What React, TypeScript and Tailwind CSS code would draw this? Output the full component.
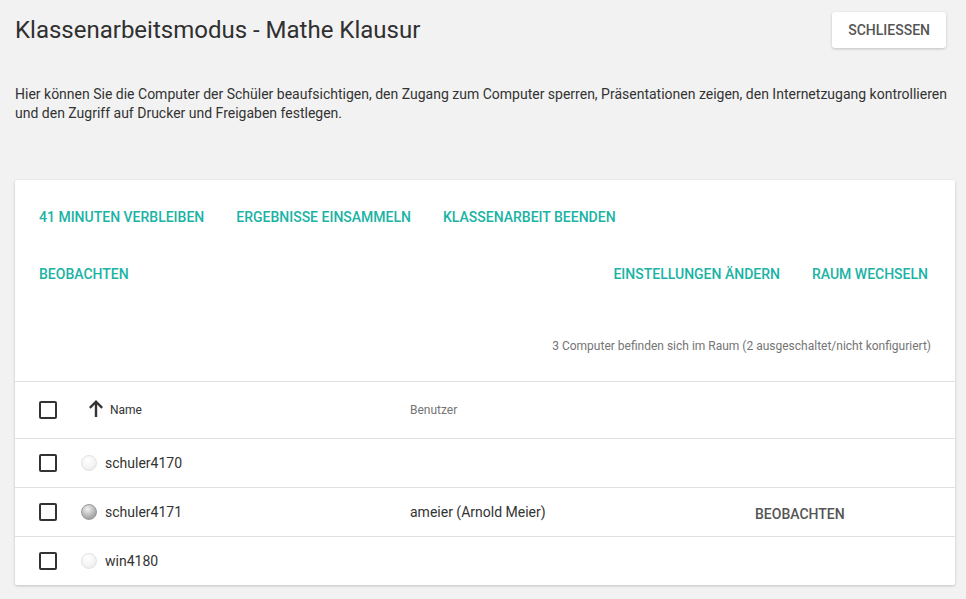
const teal = 'text-[#1ab3a4]';

const computers = [
  { name: 'schuler4170', user: '', online: false },
  { name: 'schuler4171', user: 'ameier (Arnold Meier)', online: true },
  { name: 'win4180', user: '', online: false },
];

function Checkbox() {
  return <div className="w-[18px] h-[18px] border-2 border-[#333] rounded-[2px] bg-white" />;
}

function StatusDot({ online }: { online: boolean }) {
  return online ? (
    <div className="w-4 h-4 rounded-full border border-[#9a9a9a] bg-[radial-gradient(circle_at_40%_30%,#f2f2f2_0%,#b5b5b5_55%,#8a8a8a_100%)]" />
  ) : (
    <div className="w-4 h-4 rounded-full border border-[#e2e2e2] bg-[radial-gradient(circle_at_40%_30%,#ffffff_0%,#f4f4f4_55%,#e6e6e6_100%)]" />
  );
}

function TextButton({ label }: { label: string }) {
  return (
    <button className={`h-9 px-4 text-sm font-medium uppercase ${teal} rounded`}>{label}</button>
  );
}

export default function App() {
  return (
    <div className="min-h-screen bg-[#f2f2f2] px-[15px] pb-4 text-[#333]" style={{ fontFamily: 'Roboto, "Liberation Sans", sans-serif' }}>
      {/* Header */}
      <div className="flex items-center justify-between pt-3 pr-[5px]">
        <h1 className="text-2xl font-normal text-[#303030]">Klassenarbeitsmodus - Mathe Klausur</h1>
        <button className="h-9 px-4 bg-white text-sm font-medium text-[#555] rounded-[3px] shadow-[0_1px_3px_rgba(0,0,0,0.2)]">
          SCHLIESSEN
        </button>
      </div>

      <p className="mt-[37px] text-sm leading-[19px] text-[#333]">
        Hier können Sie die Computer der Schüler beaufsichtigen, den Zugang zum Computer sperren, Präsentationen zeigen, den Internetzugang kontrollieren
        und den Zugriff auf Drucker und Freigaben festlegen.
      </p>

      {/* Card */}
      <div className="mt-[57px] mr-[-4px] bg-white rounded-[2px] shadow-[0_1px_3px_rgba(0,0,0,0.2)]">
        <div className="pt-[19px] px-2 pr-[11px]">
          <div className="flex">
            <TextButton label="41 Minuten verbleiben" />
            <TextButton label="Ergebnisse einsammeln" />
            <TextButton label="Klassenarbeit beenden" />
          </div>
          <div className="flex mt-[21px]">
            <TextButton label="Beobachten" />
            <div className="flex-1" />
            <TextButton label="Einstellungen ändern" />
            <TextButton label="Raum wechseln" />
          </div>
          <div className="mt-[46px] text-right text-xs leading-4 text-[#757575] pr-[13px]">
            3 Computer befinden sich im Raum (2 ausgeschaltet/nicht konfiguriert)
          </div>
        </div>

        <div className="mt-[27px] border-t border-[#e0e0e0]">
          {/* Table header */}
          <div className="grid grid-cols-[42px_329px_345px_1fr] items-center h-[56px] px-6">
            <Checkbox />
            <div className="flex items-center">
              <svg width="14" height="17" viewBox="0 0 14 17" className="ml-[8px] mb-[3px] fill-[#333]">
                <path d="M7 0 L14 7 L12.3 8.7 L8.2 4.6 V17 H5.8 V4.6 L1.7 8.7 L0 7 Z" />
              </svg>
              <span className="ml-[7px] text-xs text-[#333]">Name</span>
            </div>
            <span className="text-xs text-[#757575]">Benutzer</span>
            <span />
          </div>
          {computers.map((c) => (
            <div key={c.name} className="grid grid-cols-[42px_329px_345px_1fr] items-center h-[49px] px-6 border-t border-[#e0e0e0]">
              <Checkbox />
              <div className="flex items-center gap-2">
                <StatusDot online={c.online} />
                <span className="text-sm text-[#333]">{c.name}</span>
              </div>
              <span className="text-sm text-[#333]">{c.user}</span>
              <div>
                {c.online && <span className="text-sm font-medium text-[#555] relative top-[2px]">BEOBACHTEN</span>}
              </div>
            </div>
          ))}
        </div>
      </div>
    </div>
  );
}
